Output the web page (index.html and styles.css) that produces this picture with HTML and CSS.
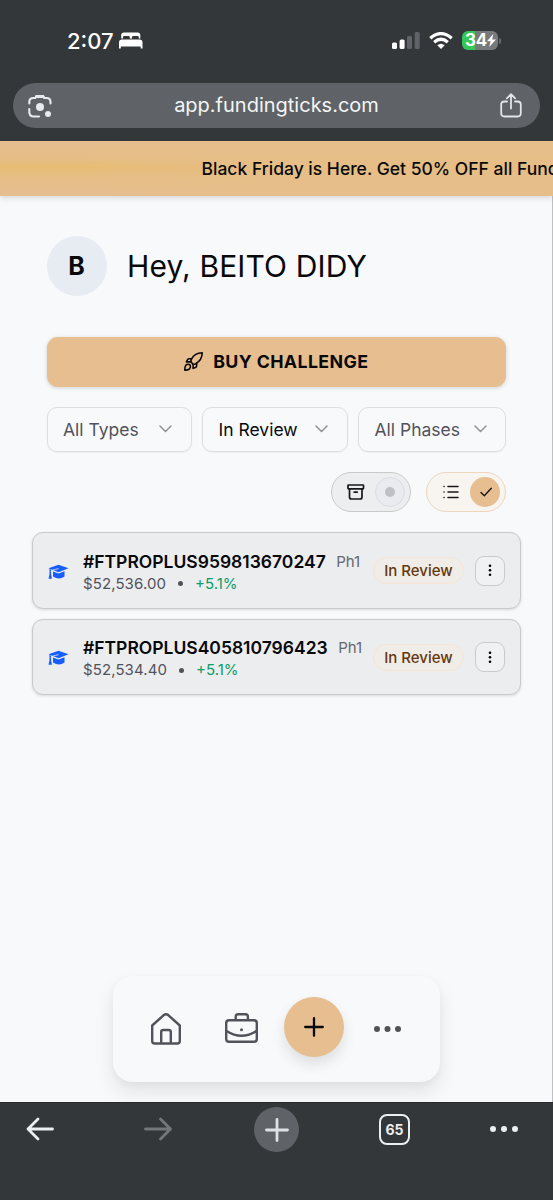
FILE: index.html
```html
<!DOCTYPE html>
<html lang="en">
<head>
<meta charset="utf-8">
<title>Funding Ticks</title>
<link rel="stylesheet" href="styles.css">
</head>
<body>
<div class="phone">
  <header class="chrome-top">
    <div class="status">
      <span class="clock">2:07</span>
      <svg class="bed" width="24" height="17" viewBox="0 0 24 17" fill="#fff"><path d="M2.2 6.500V3.200Q2.200.5 5 .5h13.500Q21.300.5 21.300 3.200v3.300h-1.500V5.300Q19.800 4 18.500 4h-4.200Q13 4 13 5.300v1.200h-2.200V5.300Q10.800 4 9.500 4H5.300Q4 4 4 5.300v1.200zM0 10.500Q0 7.500 3 7.500h17.500q3 0 3 3V16.500h-1.800V14.500H1.800v2H0z"/></svg>
      <div class="signals">
        <svg width="28" height="18" viewBox="0 0 28 18"><rect x="0" y="10.500" width="5" height="6.500" rx="1.500" fill="#fff"/><rect x="7.600" y="7.500" width="5" height="9.500" rx="1.500" fill="#fff"/><rect x="15" y="4" width="5" height="13" rx="1.500" fill="#606367"/><rect x="22.700" y="0" width="5" height="17" rx="1.500" fill="#606367"/></svg>
        <svg class="wifi" width="24" height="18" viewBox="0 0 24 18" fill="none" stroke="#fff" stroke-width="3.300"><path d="M1.300 6.300Q12-3 22.700 6.300"/><path d="M5.200 10.200Q12 4.300 18.800 10.200"/><path d="M8.300 13.300Q12 10.300 15.700 13.300L12 17z" fill="#fff" stroke="none"/></svg>
        <div class="battery"><span>34</span><svg width="9" height="13" viewBox="0 0 9 13" fill="#fff"><path d="M6.300 0L0 7.300h3.700L2.200 13 9 5.500H5.200z"/></svg></div>
        <i class="battery-tip"></i>
      </div>
    </div>
    <div class="urlbar">
      <svg width="24" height="24" viewBox="0 0 24 24" fill="none" stroke="#e8eaed" stroke-width="2.100" stroke-linecap="round"><path d="M1.300 9.500V8q0-4 4-4h2L8.500 2h6.500l1.200 2h2.300q4 0 4 4v1.500M1.300 15v3q0 4.500 4.500 4.500H11"/><path d="M8.500 2.500h6.500" stroke-width="3"/><circle cx="12" cy="13" r="4" fill="#e8eaed" stroke="none"/><circle cx="20" cy="20" r="3" fill="#e8eaed" stroke="none"/></svg>
      <span class="url">app.fundingticks.com</span>
      <svg width="22" height="25" viewBox="0 0 22 25" fill="none" stroke="#e3e5e8" stroke-width="1.800" stroke-linecap="round" stroke-linejoin="round"><path d="M7 8.500H4.500Q1.200 8.500 1.200 11.500v8.500q0 3.500 3.300 3.500h13q3.300 0 3.300-3.500v-8.500q0-3-3.300-3H15M11 15.500V1.500M6.900 5.300L11 1.200l4.100 4.100"/></svg>
    </div>
  </header>
  <div class="banner"><span>Black Friday is Here. Get 50% OFF all Funding</span></div>
  <main class="page">
    <section class="hello"><div class="avatar">B</div><h1>Hey, BEITO DIDY</h1></section>
    <button class="buy">
      <svg width="19" height="19" viewBox="0 0 24 24" fill="none" stroke="#09090b" stroke-width="2" stroke-linecap="round" stroke-linejoin="round"><path d="M9 9.500C12 4 17 1 23 1C23 7 20 12 14.500 15Q12 16.300 10.500 14.500Q8 12.500 9 9.500z"/><path d="M9.500 8.500H6.500Q5.200 8.500 4.500 9.700L3 12.500H8"/><path d="M11.500 15.700V20.700L14.500 19.500Q16 19 16 17.500V14.200"/><path d="M1 23Q1 17 3.500 15.800Q6 14.800 7.800 16.500Q9 19 7 21.300Q5 23 1 23z"/></svg>
      <span>BUY CHALLENGE</span>
    </button>
    <div class="filters">
      <div class="select"><span>All Types</span><svg width="13" height="8" viewBox="0 0 13 8"><path d="M1 1l5.500 5.500L12 1"/></svg></div>
      <div class="select chosen"><span>In Review</span><svg width="13" height="8" viewBox="0 0 13 8"><path d="M1 1l5.500 5.500L12 1"/></svg></div>
      <div class="select"><span>All Phases</span><svg width="13" height="8" viewBox="0 0 13 8"><path d="M1 1l5.500 5.500L12 1"/></svg></div>
    </div>
    <div class="toggles">
      <div class="toggle off">
        <svg width="18" height="16" viewBox="0 0 18 16" fill="none" stroke="#18181b" stroke-width="1.700" stroke-linejoin="round" stroke-linecap="round"><rect x="1" y="1" width="15.500" height="3.800" rx=".5"/><path d="M2.500 5v8Q2.500 15 4.500 15h8.500q2 0 2-2V5M7.200 8.200h3"/></svg>
        <span class="knob"><i></i></span>
      </div>
      <div class="toggle on">
        <svg width="16" height="14" viewBox="0 0 16 14" fill="none" stroke="#18181b" stroke-width="1.500" stroke-linecap="round"><path d="M5 1.500h10M5 7h10M5 12.500h10M1 1.500h.1M1 7h.1M1 12.500h.1"/></svg>
        <span class="knob"><svg width="13" height="10" viewBox="0 0 13 10" fill="none" stroke="#18181b" stroke-width="1.400" stroke-linecap="round" stroke-linejoin="round"><path d="M2 5.500l3.300 3.300 7-7.500"/></svg></span>
      </div>
    </div>
    <div class="accounts">
      <article class="account">
        <svg class="cap" width="21" height="16" viewBox="0 0 21 16"><path d="M.5 4.300L10.500.8l10 3.500-10 4z"/><path d="M5 7.500l5.500 2 6-2.300v5.300q-5.500 4.200-11.500 0zM1.500 5l1.600.4v4.800l.8 4.500H.5l1-4.500z"/><path class="cord" d="M2.800 7.500Q3 6.100 10.500 4.700"/></svg>
        <div class="info">
          <div class="name"><b>#FTPROPLUS959813670247</b><span>Ph1</span></div>
          <div class="nums"><span>$52,536.00</span><i></i><em>+5.1%</em></div>
        </div>
        <span class="badge">In Review</span>
        <button class="more"><svg width="4" height="13" viewBox="0 0 4 13"><circle cx="2" cy="1.800" r="1.300"/><circle cx="2" cy="6.300" r="1.300"/><circle cx="2" cy="10.800" r="1.300"/></svg></button>
      </article>
      <article class="account">
        <svg class="cap" width="21" height="16" viewBox="0 0 21 16"><path d="M.5 4.300L10.500.8l10 3.500-10 4z"/><path d="M5 7.500l5.500 2 6-2.300v5.300q-5.500 4.200-11.500 0zM1.500 5l1.600.4v4.800l.8 4.500H.5l1-4.500z"/><path class="cord" d="M2.800 7.500Q3 6.100 10.500 4.700"/></svg>
        <div class="info">
          <div class="name"><b>#FTPROPLUS405810796423</b><span>Ph1</span></div>
          <div class="nums"><span>$52,534.40</span><i></i><em>+5.1%</em></div>
        </div>
        <span class="badge">In Review</span>
        <button class="more"><svg width="4" height="13" viewBox="0 0 4 13"><circle cx="2" cy="1.800" r="1.300"/><circle cx="2" cy="6.300" r="1.300"/><circle cx="2" cy="10.800" r="1.300"/></svg></button>
      </article>
    </div>
    <nav class="dock">
      <svg width="30" height="32" viewBox="0 0 30 32" fill="none" stroke="#52525b" stroke-width="2.400" stroke-linejoin="round"><path d="M1.200 12.500L12.500 2.300q2.500-2 5 0L28.800 12.500V28q0 2.500-2.500 2.500H3.700Q1.200 30.500 1.200 28zM10.200 30V19q0-2 2-2h5.600q2 0 2 2v11"/></svg>
      <svg class="case" width="33" height="30" viewBox="0 0 33 30" fill="none" stroke="#52525b" stroke-width="2.400" stroke-linejoin="round"><rect x="1.200" y="7.200" width="30.600" height="21.500" rx="2.800"/><path d="M10.700 7V3.700q0-2.500 2.500-2.500h7.200q2.500 0 2.500 2.500V7M1.500 18q15 9.500 30 0"/><circle cx="16.500" cy="16.700" r="1.500" fill="#52525b" stroke="none"/></svg>
      <button class="plus"><svg width="20" height="20" viewBox="0 0 20 20" stroke="#09090b" stroke-width="2.300" stroke-linecap="round"><path d="M10 1.200v17.600M1.200 10h17.600"/></svg></button>
      <svg class="dots" width="27" height="6" viewBox="0 0 27 6" fill="#525256"><circle cx="3" cy="3" r="3"/><circle cx="13.500" cy="3" r="3"/><circle cx="24" cy="3" r="3"/></svg>
    </nav>
  </main>
  <footer class="chrome-bottom">
    <svg class="back" width="28" height="24" viewBox="0 0 28 24"><path d="M26.500 12H2M12 2L2 12l10 10"/></svg>
    <svg class="fwd" width="28" height="24" viewBox="0 0 28 24"><path d="M1.500 12H26M16.500 2l10 10-10 10"/></svg>
    <span class="newtab"><svg width="24" height="24" viewBox="0 0 24 24" stroke="#dfe1e5" stroke-width="2.800" stroke-linecap="round"><path d="M12 1.500v21M1.500 12h21"/></svg></span>
    <span class="tabs">65</span>
    <svg class="menu" width="28" height="6" viewBox="0 0 28 6" fill="#eceef0"><circle cx="3" cy="3" r="3"/><circle cx="14" cy="3" r="3"/><circle cx="25" cy="3" r="3"/></svg>
  </footer>
</div>
</body>
</html>
```
FILE: styles.css
```css
* { box-sizing: border-box; }
body { margin: 0; font-family: Inter, "Liberation Sans", sans-serif; color: #09090b; }
button { font: inherit; color: inherit; border: 0; padding: 0; }
svg { flex: none; display: block; }
.phone { width: 553px; height: 1200px; display: flex; flex-direction: column; overflow: hidden; background: #f7f8fa; }

.chrome-top { height: 141px; background: #33373a; flex: none; }
.status { height: 83px; padding: 0 53px 2px 67px; display: flex; align-items: center; color: #fff; }
.clock { font-size: 22px; font-weight: 500; line-height: 26px; width: 46px; white-space: nowrap; }
.bed { margin-left: 6px; }
.signals { margin-left: auto; display: flex; align-items: center; }
.signals .wifi { margin: 0 9px 0 9px; }
.battery { width: 36px; height: 19px; border-radius: 6px; background: linear-gradient(90deg, #35c759 37%, #77797b 37%); display: flex; align-items: center; padding-left: 3px; font-size: 17px; font-weight: 700; line-height: 19px; }
.battery span { width: 22px; letter-spacing: -.3px; }
.battery-tip { width: 2px; height: 6px; margin-left: 1px; margin-right: -1px; border-radius: 0 2px 2px 0; background: #66696c; }
.urlbar { margin: 0 13px; height: 45px; border-radius: 23px; background: #5f6367; display: flex; align-items: center; justify-content: space-between; padding: 0 18px 0 15px; }
.url { color: #f4f5f6; font-size: 20px; line-height: 24px; white-space: nowrap; padding: 0 0 1px 1px; }

.banner { height: 55px; flex: none; background: linear-gradient(90deg, rgba(230,190,137,0) 15%, rgba(230,190,137,.75) 45%), linear-gradient(180deg, #e6be90 0%, #e6bd83 35%, #e7bd72 48%, #e6bd83 62%, #e6be90 100%); box-shadow: 0 2px 6px rgba(0,0,0,.14); padding-left: 201.5px; font-size: 17.5px; font-weight: 500; line-height: 55px; letter-spacing: 0; white-space: nowrap; overflow: hidden; position: relative; z-index: 1; }

.page { flex: 1; display: flex; flex-direction: column; padding: 40px 46px 0 46.5px; border-right: 1px solid #bfc0c3; background: #f7f9fb; }
.hello { display: flex; align-items: center; gap: 20.500px; }
.avatar { width: 60px; height: 60px; border-radius: 50%; background: #e7ecf3; font-size: 25px; font-weight: 700; display: flex; align-items: center; justify-content: center; }
h1 { margin: 0; font-size: 30px; font-weight: 400; line-height: 40px; letter-spacing: .12px; white-space: nowrap; }
.buy { margin-top: 40.500px; height: 50px; flex: none; border-radius: 11px; background: #e6be90; display: flex; align-items: center; justify-content: center; gap: 10px; padding-bottom: 1px; font-size: 17.8px; font-weight: 700; letter-spacing: .37px; box-shadow: 0 1px 4px rgba(0,0,0,.16); }
.filters { margin-top: 20px; display: grid; grid-template-columns: 145px 145.500px 148px; gap: 10.500px; }
.select { height: 45px; border: 1px solid #dddee1; border-radius: 10px; display: flex; align-items: center; justify-content: space-between; padding: 0 18.500px 0 15.500px; color: #52525b; font-size: 17.5px; white-space: nowrap; box-shadow: 0 1px 2px rgba(0,0,0,.05); }
.select.chosen { color: #09090b; }
.select path { fill: none; stroke: #929297; stroke-width: 1.500; stroke-linecap: round; stroke-linejoin: round; }
.toggles { margin-top: 20px; display: flex; justify-content: flex-end; gap: 15px; }
.toggle { width: 80px; height: 40px; border: 1px solid #c9cacc; border-radius: 20px; display: flex; align-items: center; justify-content: space-between; padding: 0 5px 0 15px; background: #edeef0; }
.toggle.on { background: #f8f4f0; border-color: #edd6bc; padding-left: 16px; }
.knob { width: 30px; height: 30px; border-radius: 50%; display: flex; align-items: center; justify-content: center; background: #e6be90; }
.off .knob { background: #e9ebf0; border: 1px solid #dcdde1; }
.knob i { width: 10px; height: 10px; border-radius: 50%; background: #bfc0c4; }
.accounts { margin: 20.500px -15px 0; display: flex; flex-direction: column; gap: 10px; }
.account { height: 76.500px; border: 1.500px solid #c9cacc; border-radius: 11px; background: #ecedef; box-shadow: 0 1px 3px rgba(0,0,0,.13); display: flex; align-items: center; padding: 1px 15px 0; }
.cap { fill: #155dfc; margin-top: 2px; }
.cord { fill: none; stroke: #ecedef; stroke-width: .8; }
.info { margin-left: 14.500px; width: 290px; padding-top: 4px; }
.name { display: flex; align-items: center; gap: 10.500px; font-size: 17.5px; line-height: 22px; white-space: nowrap; }
.name b { font-weight: 600; }
.name span { font-size: 15px; color: #67676e; }
.nums { display: flex; align-items: center; font-size: 15px; line-height: 22px; color: #52525b; }
.nums span { letter-spacing: .1px; }
.nums i { width: 5px; height: 5px; border-radius: 50%; background: #52525b; margin: 0 12px; }
.nums em { font-style: normal; color: #099e68; }
.badge { width: 91px; height: 27px; border: 1px solid #f5e5d4; border-radius: 14px; background: #f0ece7; color: #65370e; font-size: 15px; font-weight: 500; line-height: 25px; text-align: center; white-space: nowrap; }
.more { margin-left: auto; width: 30px; height: 30px; border: 1px solid #c9cacc; border-radius: 9px; background: #f0f1f2; display: flex; align-items: center; justify-content: center; }
.dock { align-self: center; width: 326.500px; height: 106px; margin: auto 0 20px; border-radius: 20px; background: #f8f9fb; box-shadow: 0 10px 20px rgba(0,0,0,.09), 0 3px 8px rgba(0,0,0,.03); display: flex; align-items: center; padding: 0 38px; }
.dock .case { margin-left: 44px; margin-top: -2px; }
.plus { margin-left: 26px; margin-top: -5px; width: 60px; height: 60px; border-radius: 50%; background: #e6be90; display: flex; align-items: center; justify-content: center; box-shadow: 0 7px 14px rgba(0,0,0,.11); }
.dots { margin-left: 29.500px; }

.chrome-bottom { height: 98px; flex: none; background: #33373a; border-top: 1px solid #25282b; display: flex; align-items: flex-start; padding: 4px 35px 0 26px; }
.chrome-bottom > svg { margin-top: 10px; }
.back path, .fwd path { fill: none; stroke: #eceef0; stroke-width: 2.800; stroke-linecap: round; stroke-linejoin: round; }
.chrome-bottom > .fwd { margin-left: 90px; }
.fwd path { stroke: #747779; }
.newtab { margin-left: 82px; width: 45px; height: 45px; border-radius: 50%; background: #5f6367; display: flex; align-items: center; justify-content: center; }
.tabs { width: 31px; height: 31px; margin: 7px 0 0 80px; border: 2.500px solid #eceef0; border-radius: 8px; color: #eceef0; font-size: 14px; font-weight: 700; line-height: 27px; text-align: center; }
.chrome-bottom > .menu { margin: 19px 0 0 79.500px; }
```
